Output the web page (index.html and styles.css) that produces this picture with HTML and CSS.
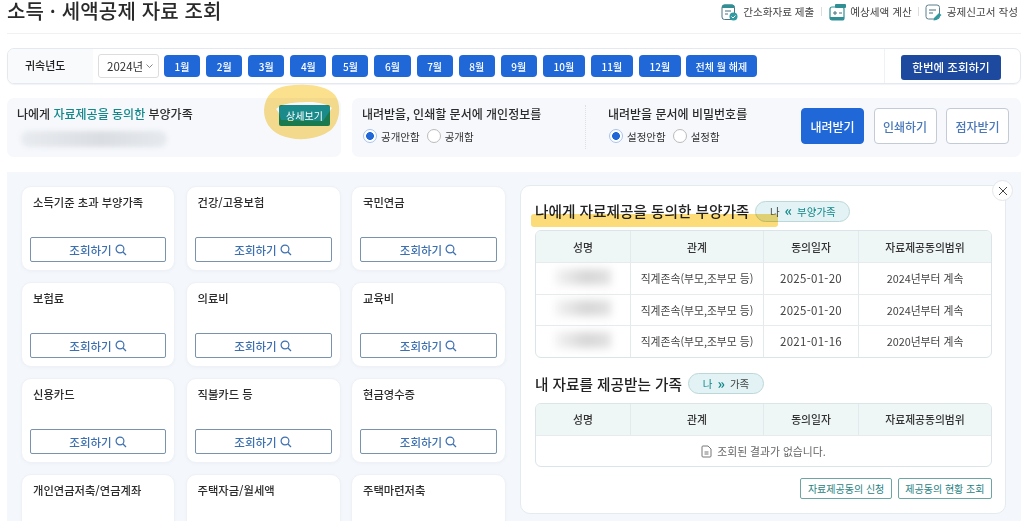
FILE: index.html
```html
<!DOCTYPE html>
<html lang="ko">
<head>
<meta charset="utf-8">
<title>소득 · 세액공제 자료 조회</title>
<link rel="stylesheet" href="styles.css">
</head>
<body>
<div class="page">
  <header class="top">
    <h1>소득 · 세액공제 자료 조회</h1>
    <nav class="links">
      <a><svg width="17" height="18" viewBox="0 0 17 18"><rect x="1" y="2" width="12.5" height="14.5" rx="2.5" fill="#fff" stroke="#4d7482"/><path d="M1 5V4a2.5 2.5 0 0 1 2.5-2.5h7.500A2.500 2.500 0 0 1 13.500 4v1z" fill="#2f8f95"/><path d="M4 8h6M4 11h3" stroke="#47717c"/><circle cx="12.500" cy="13.500" r="4" fill="#2f9ba0"/><path d="M10.500 13.500l1.500 1.500 2.500-2.500" stroke="#fff" fill="none"/></svg>간소화자료 제출</a>
      <i></i>
      <a><svg width="17" height="18" viewBox="0 0 17 18"><rect x="1" y="4" width="14" height="13" rx="2" fill="#fff" stroke="#2f8f95" stroke-width="1.2"/><path d="M1 14h14v1a2 2 0 0 1-2 2H3a2 2 0 0 1-2-2z" fill="#2f8f95"/><rect x="6" y="1" width="11" height="4" rx="1" fill="#2f8f95"/><path d="M4 10h4M6 8v4M10 10h3" stroke="#47717c"/></svg>예상세액 계산</a>
      <i></i>
      <a><svg width="18" height="18" viewBox="0 0 18 18"><rect x="1" y="2" width="13.500" height="14" rx="2.500" fill="#fff" stroke="#5b7f8c"/><path d="M4 7h7M4 10h4" stroke="#47717c"/><path d="M9 15l5-5 2.500 2-5 5-3 .5z" fill="#2f9ba0"/></svg>공제신고서 작성</a>
    </nav>
  </header>

  <section class="bar">
    <div class="bar-label">귀속년도</div>
    <div class="bar-main">
      <div class="select">2024년<svg width="7" height="4" viewBox="0 0 7 4"><path d="M.5.5l3 3 3-3" fill="none" stroke="#666" stroke-width=".8"/></svg></div>
      <button class="m">1월</button><button class="m">2월</button><button class="m">3월</button><button class="m">4월</button><button class="m">5월</button><button class="m">6월</button><button class="m">7월</button><button class="m">8월</button><button class="m">9월</button>
      <button class="m m2">10월</button><button class="m m2">11월</button><button class="m m2">12월</button>
      <button class="m m3">전체 월 해제</button>
    </div>
    <div class="bar-side"><button class="all">한번에 조회하기</button></div>
  </section>

  <section class="opts">
    <div class="opt-left">
      <div class="opt-text">
        <p class="opt-title">나에게 <b>자료제공을 동의한</b> 부양가족</p>
        <span class="blur-line"></span>
      </div>
      <button class="detail">상세보기</button>
      <svg class="hl-blob" width="90" height="65" viewBox="0 0 90 65"><path fill-rule="evenodd" fill="#fbe08e" d="M8 30C9 15 18 8 30 6C50 3 70 5 79 15C86 25 84 42 75 50C62 60 40 62 24 55C14 50 8 42 8 30ZM20 29C28 23 36 22 57 22C66 23 72 25 76 28L67 41L25 40L23 33Z"/></svg>
    </div>
    <div class="opt-right">
      <div class="opt-a">
        <p class="opt-title">내려받을, 인쇄할 문서에 개인정보를</p>
        <div class="radios"><span class="radio on"></span><label>공개안함</label><span class="radio"></span><label>공개함</label></div>
      </div>
      <div class="opt-b">
        <p class="opt-title">내려받을 문서에 비밀번호를</p>
        <div class="radios"><span class="radio on"></span><label>설정안함</label><span class="radio"></span><label>설정함</label></div>
      </div>
      <div class="acts">
        <button class="act primary">내려받기</button>
        <button class="act">인쇄하기</button>
        <button class="act">점자받기</button>
      </div>
    </div>
  </section>

  <main class="main">
    <div class="cards">
      <article class="card"><h3>소득기준 초과 부양가족</h3><button class="q">조회하기<svg class="mag" viewBox="0 0 12 12"><circle cx="5" cy="5" r="3.9"/><path d="M8 8l3 3"/></svg></button></article>
      <article class="card"><h3>건강/고용보험</h3><button class="q">조회하기<svg class="mag" viewBox="0 0 12 12"><circle cx="5" cy="5" r="3.9"/><path d="M8 8l3 3"/></svg></button></article>
      <article class="card"><h3>국민연금</h3><button class="q">조회하기<svg class="mag" viewBox="0 0 12 12"><circle cx="5" cy="5" r="3.9"/><path d="M8 8l3 3"/></svg></button></article>
      <article class="card"><h3>보험료</h3><button class="q">조회하기<svg class="mag" viewBox="0 0 12 12"><circle cx="5" cy="5" r="3.9"/><path d="M8 8l3 3"/></svg></button></article>
      <article class="card"><h3>의료비</h3><button class="q">조회하기<svg class="mag" viewBox="0 0 12 12"><circle cx="5" cy="5" r="3.9"/><path d="M8 8l3 3"/></svg></button></article>
      <article class="card"><h3>교육비</h3><button class="q">조회하기<svg class="mag" viewBox="0 0 12 12"><circle cx="5" cy="5" r="3.9"/><path d="M8 8l3 3"/></svg></button></article>
      <article class="card"><h3>신용카드</h3><button class="q">조회하기<svg class="mag" viewBox="0 0 12 12"><circle cx="5" cy="5" r="3.9"/><path d="M8 8l3 3"/></svg></button></article>
      <article class="card"><h3>직불카드 등</h3><button class="q">조회하기<svg class="mag" viewBox="0 0 12 12"><circle cx="5" cy="5" r="3.9"/><path d="M8 8l3 3"/></svg></button></article>
      <article class="card"><h3>현금영수증</h3><button class="q">조회하기<svg class="mag" viewBox="0 0 12 12"><circle cx="5" cy="5" r="3.9"/><path d="M8 8l3 3"/></svg></button></article>
      <article class="card"><h3>개인연금저축/연금계좌</h3></article>
      <article class="card"><h3>주택자금/월세액</h3></article>
      <article class="card"><h3>주택마련저축</h3></article>
    </div>

    <aside class="panel">
      <button class="close"><svg width="10" height="10" viewBox="0 0 10 10"><path d="M1 1l8 8M9 1l-8 8" stroke="#444" stroke-width="1"/></svg></button>
      <div class="head head1">
        <h2>나에게 자료제공을 동의한 부양가족</h2>
        <span class="pill"><span class="dk">나</span><b>«</b><em>부양가족</em></span>
        <span class="hl-line"></span>
      </div>
      <table>
        <thead><tr><th class="c1">성명</th><th class="c2">관계</th><th class="c3">동의일자</th><th>자료제공동의범위</th></tr></thead>
        <tbody>
          <tr><td><span class="blur-name"></span></td><td>직계존속(부모,조부모 등)</td><td class="date">2025-01-20</td><td>2024년부터 계속</td></tr>
          <tr><td><span class="blur-name"></span></td><td>직계존속(부모,조부모 등)</td><td class="date">2025-01-20</td><td>2024년부터 계속</td></tr>
          <tr><td><span class="blur-name"></span></td><td>직계존속(부모,조부모 등)</td><td class="date">2021-01-16</td><td>2020년부터 계속</td></tr>
        </tbody>
      </table>
      <div class="head head2">
        <h2>내 자료를 제공받는 가족</h2>
        <span class="pill pill2"><em>나</em><b>»</b><span class="dk">가족</span></span>
      </div>
      <table>
        <thead><tr><th class="c1">성명</th><th class="c2">관계</th><th class="c3">동의일자</th><th>자료제공동의범위</th></tr></thead>
        <tbody><tr><td colspan="4" class="empty"><svg width="11" height="13" viewBox="0 0 11 13"><path d="M1 2a1 1 0 0 1 1-1h5l3 3v7a1 1 0 0 1-1 1H2a1 1 0 0 1-1-1z M3.500 7h4M3.500 9h4" fill="none" stroke="#777"/></svg>조회된 결과가 없습니다.</td></tr></tbody>
      </table>
      <div class="foot">
        <button class="tb">자료제공동의 신청</button>
        <button class="tb">제공동의 현황 조회</button>
      </div>
    </aside>
  </main>
</div>
</body>
</html>
```
FILE: styles.css
```css
* { box-sizing: border-box; }
html, body { margin: 0; height: 521px; overflow: hidden; background: #fff; }
body { font-family: "Noto Sans CJK KR", "Noto Sans", sans-serif; color: #222; }
button { font-family: inherit; cursor: pointer; padding: 0; }
p, h1, h2, h3 { margin: 0; }
.page { padding-left: 7px; width: 1021px; }

.top { height: 34px; border-bottom: 1px solid #f0f1f3; display: flex; justify-content: space-between; align-items: flex-start; }
h1 { font-size: 20px; font-weight: 500; line-height: 21px; letter-spacing: .15px; color: #2a2a2a; white-space: nowrap; }
.links { display: flex; align-items: center; font-size: 10.6px; color: #444; height: 23px; white-space: nowrap; margin-right: 3px; }
.links a { display: flex; align-items: center; gap: 5px; }
.links i + a { gap: 4px; }
.links i { width: 1px; height: 9px; background: #ddd; margin: 0 7px; }
.links i:last-of-type { margin: 0 6px; }

.bar { margin-top: 14px; height: 36px; border: 1px solid #e4e8ef; border-radius: 7px; display: flex; overflow: hidden; box-shadow: 0 1px 1px #f2f3f5; }
.bar-label { width: 85px; background: #f8fafc; font-size: 11px; font-weight: 500; padding-left: 17px; line-height: 33px; flex: none; }
.bar-main { flex: 1; display: flex; align-items: center; gap: 6px; padding-left: 5px; }
.select { width: 61px; height: 24px; border: 1px solid #ddd; border-radius: 3px; font-size: 11.5px; color: #333; display: flex; align-items: center; gap: 3px; padding-left: 8px; margin-right: -1px; }
.m { width: 36.1px; height: 22px; border: 0; border-radius: 4px; background: #2068d8; color: #fff; font-size: 10px; font-weight: 500; }
.m2 { width: 42px; }
.m3 { width: 71px; margin-left: -1px; }
.bar-side { width: 136px; flex: none; border-left: 1px solid #f0f1f4; padding: 4px 0 0 16px; }
.all { width: 100px; height: 25px; border: 0; border-radius: 3px; background: #1d4a9e; color: #fff; font-size: 11.5px; font-weight: 500; }

.opts { margin-top: 14px; height: 59px; display: flex; gap: 11px; }
.opt-left, .opt-right { background: #f6f8fc; border-radius: 7px; }
.opt-left { width: 334px; flex: none; display: flex; justify-content: space-between; padding: 7px 11px 0 10px; position: relative; }
.opt-title { font-size: 12px; font-weight: 500; line-height: 17px; color: #2b2b2b; white-space: nowrap; }
.opt-title b { color: #12888a; font-weight: 500; }
.blur-line { display: block; width: 146px; height: 16px; margin: 9px 0 0 4px; background: linear-gradient(90deg, #e8ebef, #dadde1 55%, #e6e9ed); border-radius: 8px; filter: blur(2.5px); }
.detail { width: 51px; height: 21px; border: 0; border-radius: 2px; background: #1a8a8a; color: #fff; font-size: 10px; }
.hl-blob { position: absolute; left: 249px; top: -18px; mix-blend-mode: multiply; }
.opt-right { flex: 1; display: flex; padding: 7px 12px 0 10px; }
.opt-a { width: 224px; border-right: 1px dotted #dde0e5; height: 44px; }
.opt-b { padding-left: 22px; width: 215px; }
.radios { display: flex; align-items: center; font-size: 10.5px; color: #333; height: 20px; margin-top: 4px; padding-left: 1px; }
.radio { width: 14px; height: 14px; border-radius: 50%; background: #fff; border: 1px solid #bbb; margin-right: 4px; flex: none; }
.radio.on { border-color: #a9c4ee; background: radial-gradient(circle, #2068d8 0 3.6px, #fff 4.2px); }
.radios label { margin-right: 7px; }
.acts { display: flex; gap: 9.5px; margin-top: 3px; }
.act { width: 63px; height: 36px; border: 1px solid #c3ccd6; border-radius: 4px; background: #fff; color: #4a78b8; font-size: 12px; font-weight: 500; }
.act.primary { background: #2068d8; border-color: #2068d8; color: #fff; }

.main { margin-top: 15px; height: 349px; background: #f4f7fc; display: flex; overflow: hidden; }
.cards { width: 513px; flex: none; padding: 14px 0 0 14px; display: grid; grid-template-columns: 154px 155px 155px; grid-auto-rows: 85px; gap: 11px 10.5px; align-content: start; }
.card { background: #fff; border: 1px solid #eef1f6; border-radius: 10px; padding: 7px 8px 0; box-shadow: 0 1px 3px #edf0f6; }
.card h3 { font-size: 11.3px; font-weight: 500; line-height: 16px; padding-left: 3px; color: #2b2b2b; height: 43px; white-space: nowrap; }
.q { width: 100%; height: 25px; border: 1px solid #7a93ad; border-radius: 2px; background: #fff; color: #3d70b0; font-size: 11.5px; font-weight: 500; display: flex; align-items: center; justify-content: center; gap: 3px; }
.mag { width: 12px; height: 12px; fill: none; stroke: #3d70b0; stroke-width: 1.2; }

.panel { width: 486px; height: 329px; margin: 13px 0 0 0; background: #fff; border: 1px solid #e4ebf0; border-radius: 10px; padding: 14px 14px 0; position: relative; }
.close { position: absolute; right: -8px; top: -6px; width: 21px; height: 21px; border-radius: 50%; border: 1px solid #e3e6ea; background: #fff; display: flex; align-items: center; justify-content: center; }
.head { display: flex; align-items: center; gap: 6px; position: relative; height: 22px; }
h2 { font-size: 14.65px; font-weight: 500; color: #222; line-height: 22px; white-space: nowrap; }
.pill { height: 21px; border: 1px solid #bcd7d8; border-radius: 11px; background: #e3f2f4; display: flex; align-items: center; justify-content: center; gap: 5px; font-size: 10.5px; width: 95px; }
.pill2 { width: 76px; }
.pill b { color: #12888a; font-weight: 700; font-size: 14px; line-height: 1; margin-top: -2px; }
.pill em { color: #12888a; font-style: normal; }
.pill .dk { color: #444; }
.hl-line { position: absolute; left: -4px; top: 14px; width: 247px; height: 13px; background: #fbdc78; border-radius: 3px; mix-blend-mode: multiply; }
table { width: 457px; margin-top: 8px; border-collapse: separate; border-spacing: 0; border: 1px solid #dbe5e8; border-radius: 6px; table-layout: fixed; font-size: 10.8px; color: #444; overflow: hidden; }
th, td { height: 31.5px; text-align: center; font-weight: 400; padding: 0; border-left: 1px solid #e3eaec; border-top: 1px solid #e6ecee; white-space: nowrap; }
th:first-child, td:first-child { border-left: 0; }
th { height: 31px; border-top: 0; background: #eff6f6; color: #333; font-weight: 500; }
.c1 { width: 94px; }
.c2 { width: 133px; }
.c3 { width: 95px; }
.date { font-size: 11.5px; letter-spacing: .3px; }
.blur-name { display: inline-block; width: 56px; height: 16px; background: linear-gradient(90deg, #f4f4f4, #d6d6d6 55%, #e2e2e2); filter: blur(4px); }
.head2 { margin-top: 15px; }
.empty { color: #666; height: 31px; }
.empty svg { vertical-align: -2px; margin-right: 5px; }
.foot { display: flex; justify-content: flex-end; gap: 6px; margin-top: 11px; width: 457px; }
.tb { height: 21px; padding: 0 6.5px; border: 1px solid #6da5a5; border-radius: 2px; background: #fff; color: #1f7f82; font-size: 10px; }
```
